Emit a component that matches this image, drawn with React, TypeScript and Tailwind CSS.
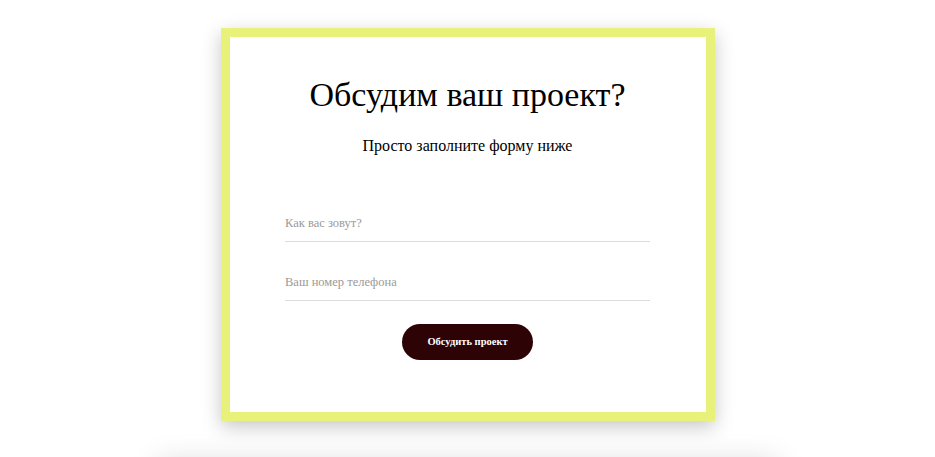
import React from "react";

export default function App() {
  return (
    <div className="h-[457px] bg-white overflow-hidden" style={{ fontFamily: '"Liberation Serif", "Times New Roman", serif' }}>
      <div className="pt-[28px] flex flex-col items-center">
        <section className="w-[494px] h-[393px] border-[9px] border-[#e8f27a] bg-white shadow-[0_6px_18px_rgba(0,0,0,0.22)] flex flex-col items-center">
          <h1 className="mt-[38px] text-[34px] leading-[40px] text-black">Обсудим ваш проект?</h1>
          <p className="mt-[21px] text-[16px] leading-[20px] text-black">Просто заполните форму ниже</p>
          <form className="mt-[50px] w-[365px] flex flex-col items-center">
            <input
              type="text"
              placeholder="Как вас зовут?"
              className="w-full h-[36px] border-b border-[#dcdcdc] bg-transparent text-[12.5px] text-[#333] placeholder:text-[#9a9a9a] outline-none"
            />
            <input
              type="tel"
              placeholder="Ваш номер телефона"
              className="mt-[23px] w-full h-[36px] border-b border-[#dcdcdc] bg-transparent text-[12.5px] text-[#333] placeholder:text-[#9a9a9a] outline-none"
            />
            <button
              type="button"
              className="mt-[23px] w-[131px] h-[36px] rounded-full bg-[#2d0306] text-white text-[10.5px] font-bold"
            >
              Обсудить проект
            </button>
          </form>
        </section>
        <div className="mt-[44px] w-[620px] h-[200px] shrink-0 bg-white shadow-[0_0_30px_rgba(0,0,0,0.18)]" />
      </div>
    </div>
  );
}
